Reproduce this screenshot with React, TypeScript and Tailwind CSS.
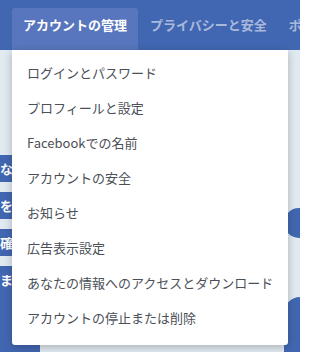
import React from 'react';

const items = [
  'ログインとパスワード',
  'プロフィールと設定',
  'Facebookでの名前',
  'アカウントの安全',
  'お知らせ',
  '広告表示設定',
  'あなたの情報へのアクセスとダウンロード',
  'アカウントの停止または削除',
];

const font = { fontFamily: '"Noto Sans CJK JP", "Noto Sans", sans-serif' };

const App: React.FC = () => {
  return (
    <div className="relative w-[300px] h-[352px] overflow-hidden bg-[#e1eaf1]" style={font}>
      {/* Top navigation */}
      <div className="flex h-[50px] bg-[#4267b2] pl-[12px] whitespace-nowrap">
        <div className="mt-[8px] flex items-center px-[11px] bg-[#5876bd] rounded-t-[3px] text-[13px] font-bold text-white pb-[8px]">
          アカウントの管理
        </div>
        <div className="flex items-center px-[12px] text-[13px] font-bold text-[#a9b9dc]">
          プライバシーと安全
        </div>
        <div className="flex items-center px-[10px] text-[13px] font-bold text-[#a9b9dc]">
          ポリシー
        </div>
      </div>

      {/* Page behind the menu */}
      <div className="flex justify-between h-[302px]">
        <div className="flex flex-col gap-[10px] pt-[105px] w-[40px] text-[13px] font-bold text-white">
          <div className="h-[27px] flex items-center bg-[#4267b2] whitespace-nowrap">なに</div>
          <div className="h-[27px] flex items-center bg-[#4267b2] whitespace-nowrap">を決</div>
          <div className="h-[27px] flex items-center bg-[#4267b2] whitespace-nowrap">確認</div>
          <div className="flex-1 bg-[#4267b2] pt-[4px] whitespace-nowrap">また</div>
        </div>
        <div className="flex flex-col w-[16px] pt-[158px]">
          <div className="h-[30px] w-[40px] rounded-full bg-[#4267b2]"></div>
          <div className="flex-1 mt-[59px] w-[40px] rounded-tl-[16px] bg-[#4267b2]"></div>
        </div>
      </div>

      {/* Dropdown */}
      <div className="absolute left-[12px] top-[50px] w-[276px] bg-white rounded-b-[3px] shadow-[0_2px_8px_rgba(0,0,0,0.25)] pt-[5px] pb-[10px]">
        {items.map((item) => (
          <div key={item} className="h-[35px] flex items-center px-[15px] text-[13px] text-[#4b4f56] whitespace-nowrap">
            {item}
          </div>
        ))}
      </div>
    </div>
  );
};

export default App;
